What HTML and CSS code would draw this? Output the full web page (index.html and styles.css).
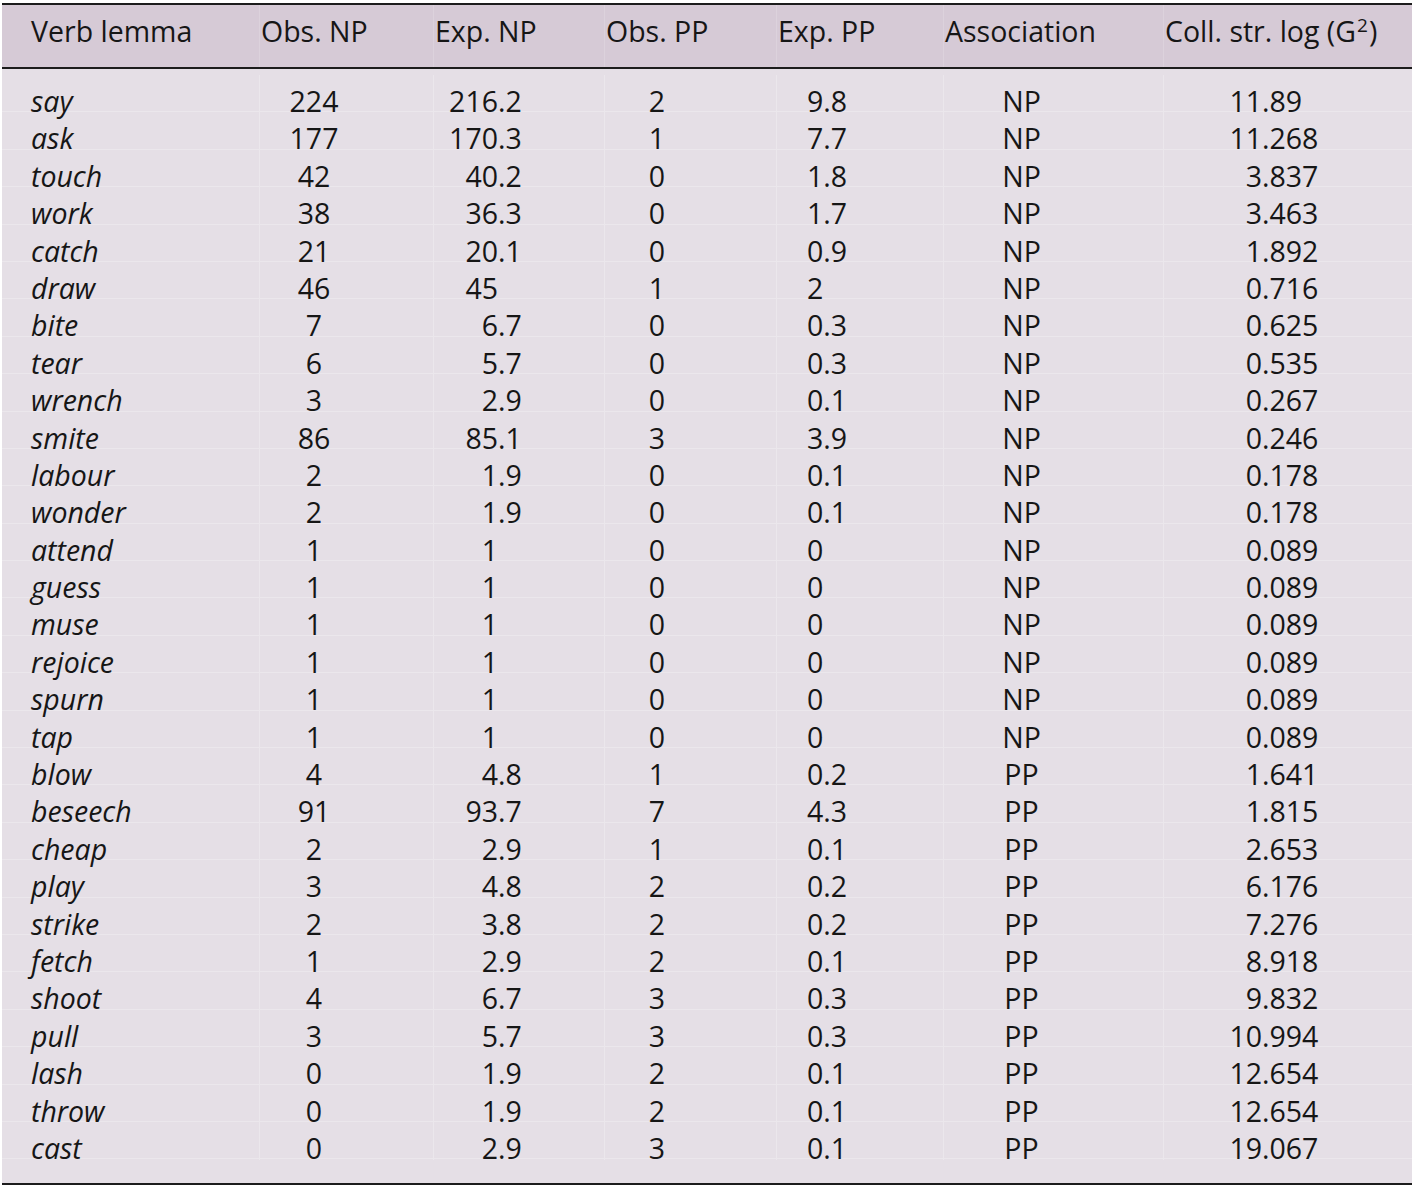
FILE: index.html
```html
<!DOCTYPE html>
<html lang="en">
<head>
<meta charset="utf-8">
<title>Verb lemma collostruction table</title>
<link rel="stylesheet" href="styles.css">
</head>
<body>
<div class="tbl">
  <div class="head">
    <div class="hc hc1">Verb lemma</div>
    <div class="hc">Obs. NP</div>
    <div class="hc">Exp. NP</div>
    <div class="hc">Obs. PP</div>
    <div class="hc">Exp. PP</div>
    <div class="hc">Association</div>
    <div class="hc">Coll. str. log (G<sup>2</sup>)</div>
  </div>
  <div class="body">
    <div class="row"><div class="c c1">say</div><div class="c c2">224</div><div class="c c3"><span class="i">216</span><span class="f">.2</span></div><div class="c c4">2</div><div class="c c5">9.8</div><div class="c c6">NP</div><div class="c c7"><span class="i">11</span><span class="f">.89</span></div></div>
    <div class="row"><div class="c c1">ask</div><div class="c c2">177</div><div class="c c3"><span class="i">170</span><span class="f">.3</span></div><div class="c c4">1</div><div class="c c5">7.7</div><div class="c c6">NP</div><div class="c c7"><span class="i">11</span><span class="f">.268</span></div></div>
    <div class="row"><div class="c c1">touch</div><div class="c c2">42</div><div class="c c3"><span class="i">40</span><span class="f">.2</span></div><div class="c c4">0</div><div class="c c5">1.8</div><div class="c c6">NP</div><div class="c c7"><span class="i">3</span><span class="f">.837</span></div></div>
    <div class="row"><div class="c c1">work</div><div class="c c2">38</div><div class="c c3"><span class="i">36</span><span class="f">.3</span></div><div class="c c4">0</div><div class="c c5">1.7</div><div class="c c6">NP</div><div class="c c7"><span class="i">3</span><span class="f">.463</span></div></div>
    <div class="row"><div class="c c1">catch</div><div class="c c2">21</div><div class="c c3"><span class="i">20</span><span class="f">.1</span></div><div class="c c4">0</div><div class="c c5">0.9</div><div class="c c6">NP</div><div class="c c7"><span class="i">1</span><span class="f">.892</span></div></div>
    <div class="row"><div class="c c1">draw</div><div class="c c2">46</div><div class="c c3"><span class="i">45</span><span class="f"></span></div><div class="c c4">1</div><div class="c c5">2</div><div class="c c6">NP</div><div class="c c7"><span class="i">0</span><span class="f">.716</span></div></div>
    <div class="row"><div class="c c1">bite</div><div class="c c2">7</div><div class="c c3"><span class="i">6</span><span class="f">.7</span></div><div class="c c4">0</div><div class="c c5">0.3</div><div class="c c6">NP</div><div class="c c7"><span class="i">0</span><span class="f">.625</span></div></div>
    <div class="row"><div class="c c1">tear</div><div class="c c2">6</div><div class="c c3"><span class="i">5</span><span class="f">.7</span></div><div class="c c4">0</div><div class="c c5">0.3</div><div class="c c6">NP</div><div class="c c7"><span class="i">0</span><span class="f">.535</span></div></div>
    <div class="row"><div class="c c1">wrench</div><div class="c c2">3</div><div class="c c3"><span class="i">2</span><span class="f">.9</span></div><div class="c c4">0</div><div class="c c5">0.1</div><div class="c c6">NP</div><div class="c c7"><span class="i">0</span><span class="f">.267</span></div></div>
    <div class="row"><div class="c c1">smite</div><div class="c c2">86</div><div class="c c3"><span class="i">85</span><span class="f">.1</span></div><div class="c c4">3</div><div class="c c5">3.9</div><div class="c c6">NP</div><div class="c c7"><span class="i">0</span><span class="f">.246</span></div></div>
    <div class="row"><div class="c c1">labour</div><div class="c c2">2</div><div class="c c3"><span class="i">1</span><span class="f">.9</span></div><div class="c c4">0</div><div class="c c5">0.1</div><div class="c c6">NP</div><div class="c c7"><span class="i">0</span><span class="f">.178</span></div></div>
    <div class="row"><div class="c c1">wonder</div><div class="c c2">2</div><div class="c c3"><span class="i">1</span><span class="f">.9</span></div><div class="c c4">0</div><div class="c c5">0.1</div><div class="c c6">NP</div><div class="c c7"><span class="i">0</span><span class="f">.178</span></div></div>
    <div class="row"><div class="c c1">attend</div><div class="c c2">1</div><div class="c c3"><span class="i">1</span><span class="f"></span></div><div class="c c4">0</div><div class="c c5">0</div><div class="c c6">NP</div><div class="c c7"><span class="i">0</span><span class="f">.089</span></div></div>
    <div class="row"><div class="c c1">guess</div><div class="c c2">1</div><div class="c c3"><span class="i">1</span><span class="f"></span></div><div class="c c4">0</div><div class="c c5">0</div><div class="c c6">NP</div><div class="c c7"><span class="i">0</span><span class="f">.089</span></div></div>
    <div class="row"><div class="c c1">muse</div><div class="c c2">1</div><div class="c c3"><span class="i">1</span><span class="f"></span></div><div class="c c4">0</div><div class="c c5">0</div><div class="c c6">NP</div><div class="c c7"><span class="i">0</span><span class="f">.089</span></div></div>
    <div class="row"><div class="c c1">rejoice</div><div class="c c2">1</div><div class="c c3"><span class="i">1</span><span class="f"></span></div><div class="c c4">0</div><div class="c c5">0</div><div class="c c6">NP</div><div class="c c7"><span class="i">0</span><span class="f">.089</span></div></div>
    <div class="row"><div class="c c1">spurn</div><div class="c c2">1</div><div class="c c3"><span class="i">1</span><span class="f"></span></div><div class="c c4">0</div><div class="c c5">0</div><div class="c c6">NP</div><div class="c c7"><span class="i">0</span><span class="f">.089</span></div></div>
    <div class="row"><div class="c c1">tap</div><div class="c c2">1</div><div class="c c3"><span class="i">1</span><span class="f"></span></div><div class="c c4">0</div><div class="c c5">0</div><div class="c c6">NP</div><div class="c c7"><span class="i">0</span><span class="f">.089</span></div></div>
    <div class="row"><div class="c c1">blow</div><div class="c c2">4</div><div class="c c3"><span class="i">4</span><span class="f">.8</span></div><div class="c c4">1</div><div class="c c5">0.2</div><div class="c c6">PP</div><div class="c c7"><span class="i">1</span><span class="f">.641</span></div></div>
    <div class="row"><div class="c c1">beseech</div><div class="c c2">91</div><div class="c c3"><span class="i">93</span><span class="f">.7</span></div><div class="c c4">7</div><div class="c c5">4.3</div><div class="c c6">PP</div><div class="c c7"><span class="i">1</span><span class="f">.815</span></div></div>
    <div class="row"><div class="c c1">cheap</div><div class="c c2">2</div><div class="c c3"><span class="i">2</span><span class="f">.9</span></div><div class="c c4">1</div><div class="c c5">0.1</div><div class="c c6">PP</div><div class="c c7"><span class="i">2</span><span class="f">.653</span></div></div>
    <div class="row"><div class="c c1">play</div><div class="c c2">3</div><div class="c c3"><span class="i">4</span><span class="f">.8</span></div><div class="c c4">2</div><div class="c c5">0.2</div><div class="c c6">PP</div><div class="c c7"><span class="i">6</span><span class="f">.176</span></div></div>
    <div class="row"><div class="c c1">strike</div><div class="c c2">2</div><div class="c c3"><span class="i">3</span><span class="f">.8</span></div><div class="c c4">2</div><div class="c c5">0.2</div><div class="c c6">PP</div><div class="c c7"><span class="i">7</span><span class="f">.276</span></div></div>
    <div class="row"><div class="c c1">fetch</div><div class="c c2">1</div><div class="c c3"><span class="i">2</span><span class="f">.9</span></div><div class="c c4">2</div><div class="c c5">0.1</div><div class="c c6">PP</div><div class="c c7"><span class="i">8</span><span class="f">.918</span></div></div>
    <div class="row"><div class="c c1">shoot</div><div class="c c2">4</div><div class="c c3"><span class="i">6</span><span class="f">.7</span></div><div class="c c4">3</div><div class="c c5">0.3</div><div class="c c6">PP</div><div class="c c7"><span class="i">9</span><span class="f">.832</span></div></div>
    <div class="row"><div class="c c1">pull</div><div class="c c2">3</div><div class="c c3"><span class="i">5</span><span class="f">.7</span></div><div class="c c4">3</div><div class="c c5">0.3</div><div class="c c6">PP</div><div class="c c7"><span class="i">10</span><span class="f">.994</span></div></div>
    <div class="row"><div class="c c1">lash</div><div class="c c2">0</div><div class="c c3"><span class="i">1</span><span class="f">.9</span></div><div class="c c4">2</div><div class="c c5">0.1</div><div class="c c6">PP</div><div class="c c7"><span class="i">12</span><span class="f">.654</span></div></div>
    <div class="row"><div class="c c1">throw</div><div class="c c2">0</div><div class="c c3"><span class="i">1</span><span class="f">.9</span></div><div class="c c4">2</div><div class="c c5">0.1</div><div class="c c6">PP</div><div class="c c7"><span class="i">12</span><span class="f">.654</span></div></div>
    <div class="row"><div class="c c1">cast</div><div class="c c2">0</div><div class="c c3"><span class="i">2</span><span class="f">.9</span></div><div class="c c4">3</div><div class="c c5">0.1</div><div class="c c6">PP</div><div class="c c7"><span class="i">19</span><span class="f">.067</span></div></div>
  </div>
</div>
</body>
</html>
```
FILE: styles.css
```css
html, body {
  margin: 0;
  padding: 0;
  background: #ffffff;
}

body {
  font-family: "Open Sans", "Noto Sans", "DejaVu Sans", sans-serif;
  font-size: 28.5px;
  color: #161616;
}

.tbl {
  margin: 3px 0 0 2px;
  width: 1410px;
  border-top: 2px solid #1c1c1c;
  border-bottom: 2px solid #1c1c1c;
  background: #e5dfe6;
}

.head,
.row {
  display: grid;
  grid-template-columns: 257px 174px 171px 172px 167px 220px 249px;
}

.head {
  height: 62px;
  background: #d6cad6;
  border-bottom: 2px solid #1c1c1c;
}

.hc {
  display: flex;
  align-items: center;
  padding: 0 0 10px 1px;
  border-left: 1px solid #dcd2dc;
  white-space: nowrap;
}

.hc1 {
  padding-left: 29px;
  border-left: none;
}

.hc sup {
  font-size: 19px;
  line-height: 0;
  position: relative;
  top: -6px;
  margin-left: 1px;
  margin-right: 1px;
}

.body {
  padding: 6px 0 24px;
}

.row {
  height: 37.4px;
  box-sizing: border-box;
  border-bottom: 1px solid #ebe7ec;
}

.c {
  box-sizing: border-box;
  padding-top: 14px;
  line-height: 24px;
  white-space: nowrap;
  border-left: 1px solid #ebe7ec;
}

.c1 {
  padding-left: 29px;
  font-style: italic;
  border-left: none;
}

.c2 {
  text-align: center;
  padding-right: 65px;
}

.c3 .i {
  display: inline-block;
  width: 64px;
  text-align: right;
}

.c4 {
  text-align: center;
  padding-right: 67px;
}

.c5 {
  padding-left: 30px;
}

.c6 {
  text-align: center;
  padding-right: 64px;
}

.c7 .i {
  display: inline-block;
  width: 98px;
  text-align: right;
}
```
